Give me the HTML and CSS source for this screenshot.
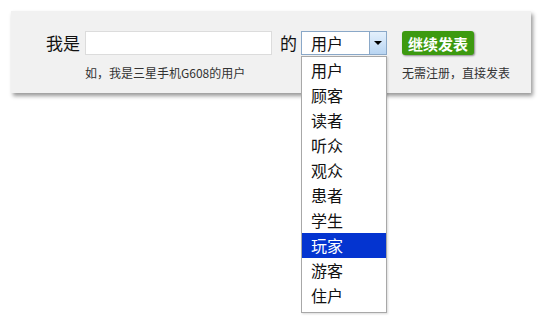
FILE: index.html
```html
<!DOCTYPE html>
<html lang="zh-CN">
  <head>
    <meta charset="UTF-8" />
    <title>我是……的用户</title>
    <link rel="stylesheet" href="styles.css">
  </head>
  <body>
    <div class="panel">
      <div class="group">
        <span class="label">我是</span>
        <div class="field">
          <input type="text" class="name-input" />
          <p class="hint">如，我是三星手机G608的用户</p>
        </div>
      </div>
      <div class="group">
        <span class="label label-de">的</span>
        <div class="select">
          <span class="select-value">用户</span>
          <span class="select-arrow"></span>
          <ul class="options">
            <li>用户</li>
            <li>顾客</li>
            <li>读者</li>
            <li>听众</li>
            <li>观众</li>
            <li>患者</li>
            <li>学生</li>
            <li class="active">玩家</li>
            <li>游客</li>
            <li>住户</li>
          </ul>
        </div>
      </div>
      <div class="field submit">
        <button class="btn">继续发表</button>
        <p class="hint">无需注册，直接发表</p>
      </div>
    </div>
  </body>
</html>
```

FILE: styles.css
```css
* {
  box-sizing: border-box;
  margin: 0;
  padding: 0;
}

html,
body {
  height: 323px;
}

body {
  background: #fff;
  font-family: "Noto Sans CJK SC", "DejaVu Sans", sans-serif;
  color: #222;
  padding: 11px 0 0 11px;
}

.panel {
  width: 520px;
  height: 82px;
  background: #f1f1f1;
  box-shadow: 2px 3px 4px #999;
  display: flex;
  align-items: flex-start;
  padding: 20px 0 0 35px;
}

.group {
  display: flex;
  align-items: flex-start;
}

.label {
  font-size: 17px;
  line-height: 24px;
  color: #111;
  margin-right: 5px;
}

.label-de {
  margin: 0 4px 0 8px;
}

.field {
  display: flex;
  flex-direction: column;
}

.name-input {
  width: 187px;
  height: 24px;
  border: 1px solid #dcdcdc;
  background: #fff;
  outline: none;
}

.hint {
  font-size: 12px;
  line-height: 16px;
  color: #333;
  margin-top: 10px;
}

.select {
  position: relative;
  z-index: 2;
  width: 86px;
  height: 24px;
  border: 1px solid #8aa8c8;
  background: #fff;
}

.select-value {
  display: block;
  font-size: 16px;
  line-height: 22px;
  padding-left: 9px;
  color: #111;
}

.select-arrow {
  position: absolute;
  top: 0;
  right: 0;
  width: 17px;
  height: 22px;
  border-left: 1px solid #8aa8c8;
  background: linear-gradient(#e4f0fc, #b9d5f2);
}

.select-arrow::after {
  content: "";
  position: absolute;
  left: 4px;
  top: 9px;
  border-left: 4px solid transparent;
  border-right: 4px solid transparent;
  border-top: 4px solid #000;
}

.options {
  position: absolute;
  top: 24px;
  left: -1px;
  width: 86px;
  list-style: none;
  background: #fff;
  border: 1px solid #a8a8a8;
  padding: 1px 0 4px;
  box-shadow: 1px 1px 2px rgba(0, 0, 0, 0.15);
}

.options li {
  font-size: 16px;
  line-height: 25px;
  padding-left: 9px;
  color: #111;
}

.options li.active {
  background: #0434d0;
  color: #fff;
}

.submit {
  margin-left: 15px;
}

.btn {
  width: 72px;
  height: 24px;
  border: none;
  border-radius: 3px;
  background: #3d9a10;
  color: #fff;
  font-family: inherit;
  font-size: 15px;
  font-weight: bold;
  box-shadow: 1px 1px 2px #8a8a8a;
}
```
